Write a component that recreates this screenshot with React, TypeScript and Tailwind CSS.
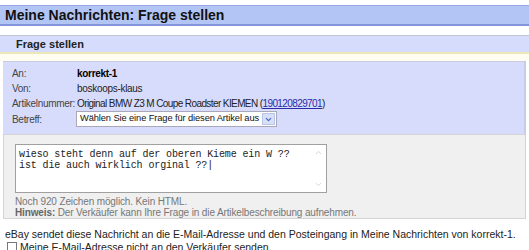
import { ChevronDown, ChevronUp } from "lucide-react";

const rows = [
  { label: "An:", value: <b className="text-black">korrekt-1</b> },
  { label: "Von:", value: <span>boskoops-klaus</span> },
  {
    label: "Artikelnummer:",
    value: (
      <span className="tracking-[-0.6px]">
        Original BMW Z3 M Coupe Roadster KIEMEN (
        <a href="#" className="text-[#2a2aa8] underline">
          190120829701
        </a>
        )
      </span>
    ),
  },
];

const App = () => {
  return (
    <div className="w-[529px] h-[250px] overflow-hidden bg-white font-['Liberation_Sans',Arial,sans-serif] text-[10px] tracking-[-0.3px] text-[#333]">
      <div className="mt-[5px] h-[21px] bg-[#b3c5f5] border-t border-t-[#98a8e8] border-b-2 border-b-[#8595dc] flex items-center px-[5px]">
        <h1 className="text-[14px] tracking-normal font-bold text-[#111]">Meine Nachrichten: Frage stellen</h1>
      </div>

      <div className="mt-[9px] h-[19px] bg-[#d5dcfc] border-t border-t-[#c0c4d4] border-b-2 border-b-[#ece8b8] flex items-center pl-[16px]">
        <span className="font-bold text-[11px] tracking-normal text-[#222]">Frage stellen</span>
      </div>
      <div className="h-[7px] bg-[#fffcf0]" />

      <div className="mx-[3px] bg-[#d8dcfc] border-t border-t-[#c8cce0] border-r-2 border-r-[#c8cce8] pl-[9px] pt-[4px] pb-[7px]">
        {rows.map(({ label, value }, i) => (
          <div key={i} className="flex h-[15px] items-center">
            <span className="w-[65px] shrink-0 text-[#444]">{label}</span>
            <span className="text-[#222] whitespace-nowrap">{value}</span>
          </div>
        ))}
        <div className="flex items-center h-[16px]">
          <span className="w-[64px] shrink-0 text-[#444]">Betreff:</span>
          <div className="flex items-center h-[16px] bg-white border border-[#a8a8b8] pl-[3px] pr-[1px]">
            <span className="text-[#111] text-[9.3px] tracking-[-0.1px] pr-[3px]">Wählen Sie eine Frage für diesen Artikel aus</span>
            <span className="w-[13px] h-[12px] bg-[#d8e0f8] border border-[#b8c4e8] flex items-center justify-center">
              <ChevronDown size={9} strokeWidth={3} className="text-[#4060c0]" />
            </span>
          </div>
        </div>
      </div>

      <div className="mx-[3px] bg-[#f0f0f0] border border-[#d4d4d4] pl-[11px] pt-[9px]">
        <div className="w-[312px] h-[49px] bg-white border border-[#a0a0a0] flex">
          <div className="flex-1 pl-[3px] pt-[4px] font-['Liberation_Mono','Courier_New',monospace] text-[10px] tracking-[-0.12px] leading-[11px] text-[#222] whitespace-pre">
            {"wieso steht denn auf der oberen Kieme ein W ??\nist die auch wirklich orginal ??|"}
          </div>
          <div className="w-[16px] flex flex-col justify-between items-center py-[3px] text-[#c8c8c8]">
            <ChevronUp size={9} strokeWidth={2} />
            <ChevronDown size={9} strokeWidth={2} />
          </div>
        </div>
        <div className="mt-[3px] text-[#777] tracking-[-0.13px] leading-[11px]">Noch 920 Zeichen möglich. Kein HTML.</div>
        <div className="text-[#777] tracking-[-0.13px] leading-[11px]">
          <b className="text-[#666]">Hinweis:</b> Der Verkäufer kann Ihre Frage in die Artikelbeschreibung aufnehmen.
        </div>
      </div>

      <div className="mt-[9px] pl-[5px] text-[10.5px] tracking-normal leading-[12px] text-[#222] whitespace-nowrap">
        eBay sendet diese Nachricht an die E-Mail-Adresse und den Posteingang in Meine Nachrichten von korrekt-1.
      </div>
      <div className="mt-[1px] pl-[7px] flex items-center gap-[3px] text-[10.5px] tracking-normal leading-[12px] text-[#222]">
        <span className="w-[10px] h-[10px] border border-[#777] bg-white" />
        <span>Meine E-Mail-Adresse nicht an den Verkäufer senden.</span>
      </div>
    </div>
  );
};

export default App;
